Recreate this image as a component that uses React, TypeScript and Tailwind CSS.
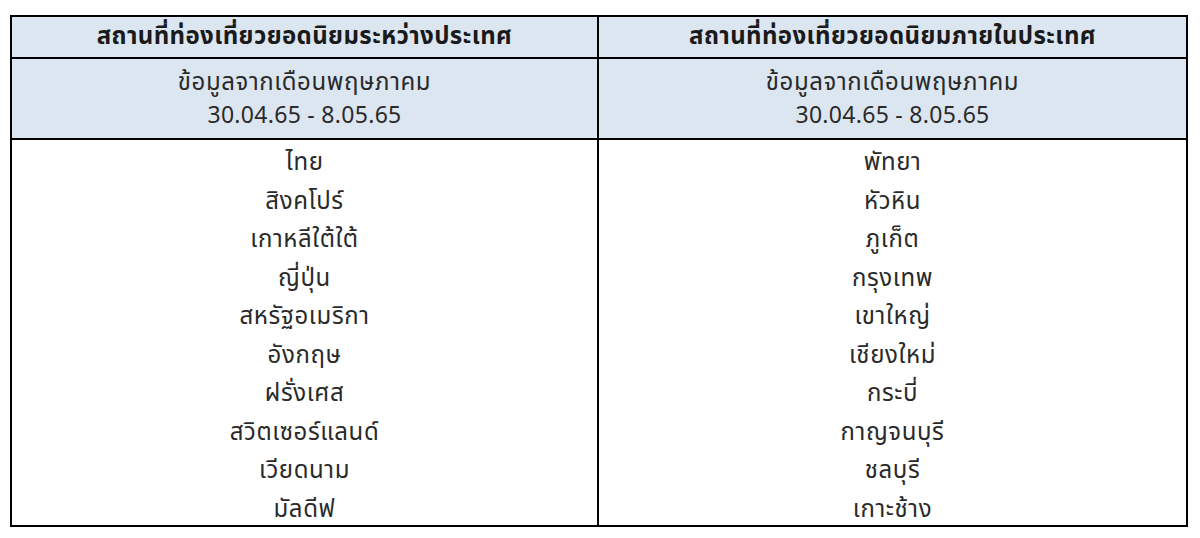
import React from 'react';

const intl = [
  'ไทย',
  'สิงคโปร์',
  'เกาหลีใต้ใต้',
  'ญี่ปุ่น',
  'สหรัฐอเมริกา',
  'อังกฤษ',
  'ฝรั่งเศส',
  'สวิตเซอร์แลนด์',
  'เวียดนาม',
  'มัลดีฟ',
];

const domestic = [
  'พัทยา',
  'หัวหิน',
  'ภูเก็ต',
  'กรุงเทพ',
  'เขาใหญ่',
  'เชียงใหม่',
  'กระบี่',
  'กาญจนบุรี',
  'ชลบุรี',
  'เกาะช้าง',
];

const Column: React.FC<{ title: string; items: string[]; last?: boolean }> = ({ title, items, last }) => {
  return (
    <div className={`flex flex-col ${last ? '' : 'border-r-2 border-black'}`}>
      <div className="h-[42px] flex items-center justify-center bg-[#dce6f1] border-b-2 border-black font-bold text-[24px] tracking-[0.4px] text-[#1a1a1a]">
        {title}
      </div>
      <div className="h-[81px] flex flex-col items-center justify-center pt-[3px] bg-[#dce6f1] border-b-2 border-black text-[#2a2a2a]">
        <span className="text-[24px] leading-[33px] tracking-[0.6px]">ข้อมูลจากเดือนพฤษภาคม</span>
        <span className="text-[23px] leading-[33px] tracking-[0.3px]">30.04.65 - 8.05.65</span>
      </div>
      <div className="flex flex-col pt-[4px] text-[24px] tracking-[0.6px] text-[#2a2a2a]">
        {items.map((item, i) => (
          <div key={i} className="h-[38.5px] flex items-center justify-center">
            {item}
          </div>
        ))}
      </div>
    </div>
  );
};

export default function App() {
  return (
    <div
      className="w-[1200px] h-[538px] bg-white pt-[15px] pl-[10px]"
      style={{ fontFamily: 'Tahoma, "Noto Sans Thai", "Noto Sans", "DejaVu Sans", sans-serif' }}
    >
      <div className="w-[1178px] h-[512px] border-2 border-black grid grid-cols-2 overflow-hidden">
        <Column title="สถานที่ท่องเที่ยวยอดนิยมระหว่างประเทศ" items={intl} />
        <Column title="สถานที่ท่องเที่ยวยอดนิยมภายในประเทศ" items={domestic} last />
      </div>
    </div>
  );
}
